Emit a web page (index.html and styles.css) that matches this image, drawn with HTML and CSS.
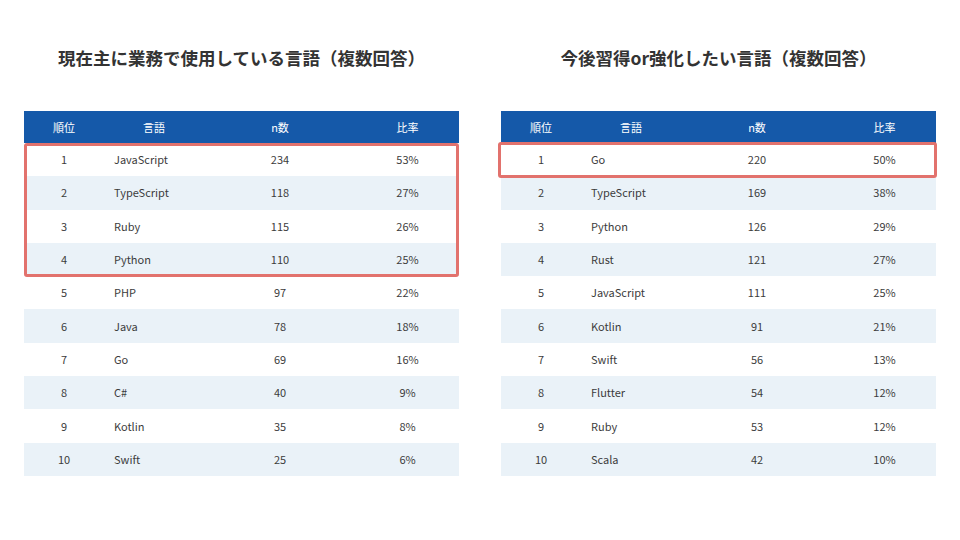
FILE: index.html
```html
<!DOCTYPE html>
<html lang="ja">
<head>
<meta charset="utf-8">
<link rel="stylesheet" href="styles.css">
</head>
<body>
<div class="page">
  <section class="panel">
    <h2 class="title">現在主に業務で使用している言語（複数回答）</h2>
    <div class="table">
      <div class="row head"><span>順位</span><span class="hl">言語</span><span>n数</span><span>比率</span></div>
      <div class="row"><span>1</span><span class="lang">JavaScript</span><span>234</span><span>53%</span></div>
      <div class="row alt"><span>2</span><span class="lang">TypeScript</span><span>118</span><span>27%</span></div>
      <div class="row"><span>3</span><span class="lang">Ruby</span><span>115</span><span>26%</span></div>
      <div class="row alt"><span>4</span><span class="lang">Python</span><span>110</span><span>25%</span></div>
      <div class="row"><span>5</span><span class="lang">PHP</span><span>97</span><span>22%</span></div>
      <div class="row alt"><span>6</span><span class="lang">Java</span><span>78</span><span>18%</span></div>
      <div class="row"><span>7</span><span class="lang">Go</span><span>69</span><span>16%</span></div>
      <div class="row alt"><span>8</span><span class="lang">C#</span><span>40</span><span>9%</span></div>
      <div class="row"><span>9</span><span class="lang">Kotlin</span><span>35</span><span>8%</span></div>
      <div class="row alt"><span>10</span><span class="lang">Swift</span><span>25</span><span>6%</span></div>
      <div class="mark mark-left"></div>
    </div>
  </section>
  <section class="panel">
    <h2 class="title">今後習得or強化したい言語（複数回答）</h2>
    <div class="table">
      <div class="row head"><span>順位</span><span class="hl">言語</span><span>n数</span><span>比率</span></div>
      <div class="row"><span>1</span><span class="lang">Go</span><span>220</span><span>50%</span></div>
      <div class="row alt"><span>2</span><span class="lang">TypeScript</span><span>169</span><span>38%</span></div>
      <div class="row"><span>3</span><span class="lang">Python</span><span>126</span><span>29%</span></div>
      <div class="row alt"><span>4</span><span class="lang">Rust</span><span>121</span><span>27%</span></div>
      <div class="row"><span>5</span><span class="lang">JavaScript</span><span>111</span><span>25%</span></div>
      <div class="row alt"><span>6</span><span class="lang">Kotlin</span><span>91</span><span>21%</span></div>
      <div class="row"><span>7</span><span class="lang">Swift</span><span>56</span><span>13%</span></div>
      <div class="row alt"><span>8</span><span class="lang">Flutter</span><span>54</span><span>12%</span></div>
      <div class="row"><span>9</span><span class="lang">Ruby</span><span>53</span><span>12%</span></div>
      <div class="row alt"><span>10</span><span class="lang">Scala</span><span>42</span><span>10%</span></div>
      <div class="mark mark-right"></div>
    </div>
  </section>
</div>
</body>
</html>
```
FILE: styles.css
```css
html, body {
  margin: 0;
  padding: 0;
  background: #ffffff;
}
body {
  width: 960px;
  height: 540px;
  overflow: hidden;
  font-family: "Noto Sans CJK JP", "Noto Sans", sans-serif;
  color: #333333;
}
.page {
  display: flex;
  gap: 42px;
  padding: 0 0 0 24px;
}
.panel {
  width: 435px;
  display: flex;
  flex-direction: column;
}
.title {
  margin: 0;
  height: 111px;
  box-sizing: border-box;
  padding-top: 45px;
  font-size: 17.5px;
  line-height: 26px;
  font-weight: 700;
  text-align: center;
  color: #333333;
  letter-spacing: 0;
}
.table {
  position: relative;
  width: 435px;
}
.row {
  display: grid;
  grid-template-columns: 80px 100px 152px 103px;
  height: 33.3px;
  align-items: center;
  font-size: 11px;
  line-height: 14px;
  padding-bottom: 1px;
  box-sizing: border-box;
  font-weight: 400;
  color: #3c3c3c;
  background: #ffffff;
}
.row span {
  text-align: center;
}
.row .lang {
  text-align: left;
  padding-left: 10px;
}
.row.alt {
  background: #eaf2f8;
}
.row.head {
  height: 32px;
  background: #1559a9;
  color: #ffffff;
}
.mark {
  position: absolute;
  border: 3px solid #e2726d;
  border-radius: 3px;
  box-sizing: border-box;
}
.mark-left {
  left: 0;
  top: 32px;
  width: 435px;
  height: 134px;
}
.mark-right {
  left: -3px;
  top: 31px;
  width: 439px;
  height: 36px;
}
```
